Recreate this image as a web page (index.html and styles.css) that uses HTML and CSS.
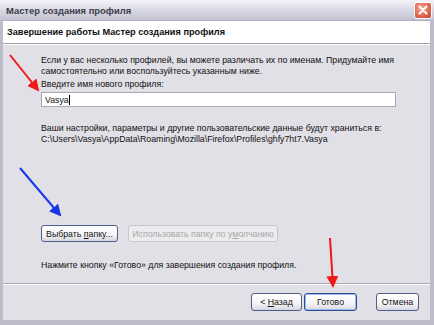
FILE: index.html
```html
<!DOCTYPE html>
<html lang="ru">
<head>
  <meta charset="UTF-8">
  <title>Мастер создания профиля</title>
  <link rel="stylesheet" href="styles.css">
</head>
<body>
  <div class="window">
    <div class="titlebar">
      <span class="title">Мастер создания профиля</span>
      <span class="close">
        <svg width="14" height="14" viewBox="0 0 14 14">
          <path d="M3.5 3.5 L10.5 10.5 M10.5 3.5 L3.5 10.5" stroke="#fff" stroke-width="2" stroke-linecap="round"/>
        </svg>
      </span>
    </div>
    <div class="frame">
      <div class="header">Завершение работы Мастер создания профиля</div>
      <div class="content">
        <p class="intro">Если у вас несколько профилей, вы можете различать их по именам. Придумайте имя<br>самостоятельно или воспользуйтесь указанным ниже.</p>
        <label class="label">Введите имя нового профиля:</label>
        <div class="field">Vasya<span class="caret"></span></div>
        <p class="store">Ваши настройки, параметры и другие пользовательские данные будут храниться в:<br>C:\Users\Vasya\AppData\Roaming\Mozilla\Firefox\Profiles\ghfy7ht7.Vasya</p>
        <div class="folder-row">
          <button class="btn choose">Выбрать <u>п</u>апку...</button>
          <button class="btn disabled">Использовать папку по у<u>м</u>олчанию</button>
        </div>
        <p class="finish">Нажмите кнопку «Готово» для завершения создания профиля.</p>
      </div>
      <div class="footer">
        <button class="btn back">&lt; <u>Н</u>азад</button>
        <button class="btn done">Готово</button>
        <button class="btn cancel">Отмена</button>
      </div>
    </div>

    <svg class="arrows" width="434" height="325" viewBox="0 0 434 325">
      <defs>
        <marker id="red-head" markerWidth="6" markerHeight="6" refX="5" refY="3" orient="auto">
          <path d="M0 0 L6 3 L0 6 Z" fill="#f01818"/>
        </marker>
        <marker id="blue-head" markerWidth="6" markerHeight="6" refX="5" refY="3" orient="auto">
          <path d="M0 0 L6 3 L0 6 Z" fill="#1838e8"/>
        </marker>
      </defs>
      <line x1="10" y1="55" x2="38" y2="90" stroke="#f01818" stroke-width="2" marker-end="url(#red-head)"/>
      <line x1="20" y1="168" x2="60" y2="215" stroke="#1838e8" stroke-width="2" marker-end="url(#blue-head)"/>
      <line x1="330" y1="238" x2="333" y2="286" stroke="#f01818" stroke-width="2" marker-end="url(#red-head)"/>
    </svg>
  </div>
</body>
</html>
```

FILE: styles.css
```css
body {
  margin: 0;
  width: 434px;
  height: 325px;
  overflow: hidden;
  font-family: "Liberation Sans", Arial, sans-serif;
  font-size: 8.75px;
  color: #111;
  background: #e1e0e6;
}
.window {
  position: relative;
  width: 434px;
  height: 325px;
  display: flex;
  flex-direction: column;
}
.titlebar {
  height: 20px;
  flex-shrink: 0;
  display: flex;
  align-items: center;
  justify-content: space-between;
  padding: 0 2px 0 6px;
  background: linear-gradient(#f4f4f9 0%, #dedee8 40%, #c2c2d4 100%);
}
.title {
  font-family: "Liberation Sans", Arial, sans-serif;
  font-weight: bold;
  font-size: 9.4px;
  color: #3c3c46;
}
.close {
  width: 18px;
  height: 17px;
  border-radius: 3px;
  border: 1px solid #fff;
  box-sizing: border-box;
  background: radial-gradient(circle at 40% 35%, #f4a898 0%, #e26a52 55%, #c4402a 100%);
  display: flex;
  align-items: center;
  justify-content: center;
}
.frame {
  flex: 1;
  min-height: 0;
  display: flex;
  flex-direction: column;
  border-left: 3px solid #bcbccb;
  border-right: 4px solid #bcbccb;
  border-bottom: 5px solid #bcbccb;
}
.header {
  height: 22px;
  flex-shrink: 0;
  background: #fff;
  font-weight: bold;
  font-size: 9.2px;
  padding-left: 4px;
  display: flex;
  align-items: center;
  border-top: 1px solid #b0b0c0;
  border-bottom: 1px solid #a0a0ae;
  box-shadow: 0 1px 0 #fff;
}
.content {
  flex: 1;
  min-height: 0;
  padding: 11px 0 0 38px;
}
.intro,
.store,
.finish {
  margin: 0;
  line-height: 11px;
}
.label {
  display: block;
  margin-top: 2px;
  line-height: 11px;
}
.field {
  width: 355px;
  height: 15px;
  margin-top: 2px;
  box-sizing: border-box;
  background: #fff;
  border: 1px solid #a8a8b8;
  padding-left: 3px;
  display: flex;
  align-items: center;
}
.caret {
  width: 1px;
  height: 10px;
  background: #000;
}
.store {
  margin-top: 16px;
}
.folder-row {
  display: flex;
  gap: 10px;
  margin-top: 80px;
}
.btn {
  font-family: inherit;
  font-size: 8.75px;
  color: #111;
  height: 17px;
  padding: 0 3px;
  border: 1px solid #4e5e88;
  border-radius: 3px;
  background: linear-gradient(#ffffff 0%, #f4f4f6 60%, #d6d6e0 100%);
}
.btn.choose {
  width: 77px;
}
.btn.disabled {
  width: 150px;
  color: #a8a8a8;
  border-color: #c8c8cc;
  background: #ecebee;
}
.finish {
  margin-top: 18px;
}
.footer {
  height: 36px;
  flex-shrink: 0;
  border-top: 1px solid #a8a8b8;
  box-shadow: inset 0 1px 0 #fff;
  display: flex;
  justify-content: flex-end;
  align-items: center;
  padding-right: 11px;
}
.footer .btn {
  height: 18px;
}
.btn.back {
  width: 51px;
}
.btn.done {
  width: 53px;
  margin-left: 2px;
  border-color: #2e4e90;
  box-shadow: inset 0 0 0 1px #9cbcea;
}
.btn.cancel {
  width: 43px;
  margin-left: 19px;
}
.arrows {
  position: absolute;
  left: 0;
  top: 0;
  pointer-events: none;
}
```
